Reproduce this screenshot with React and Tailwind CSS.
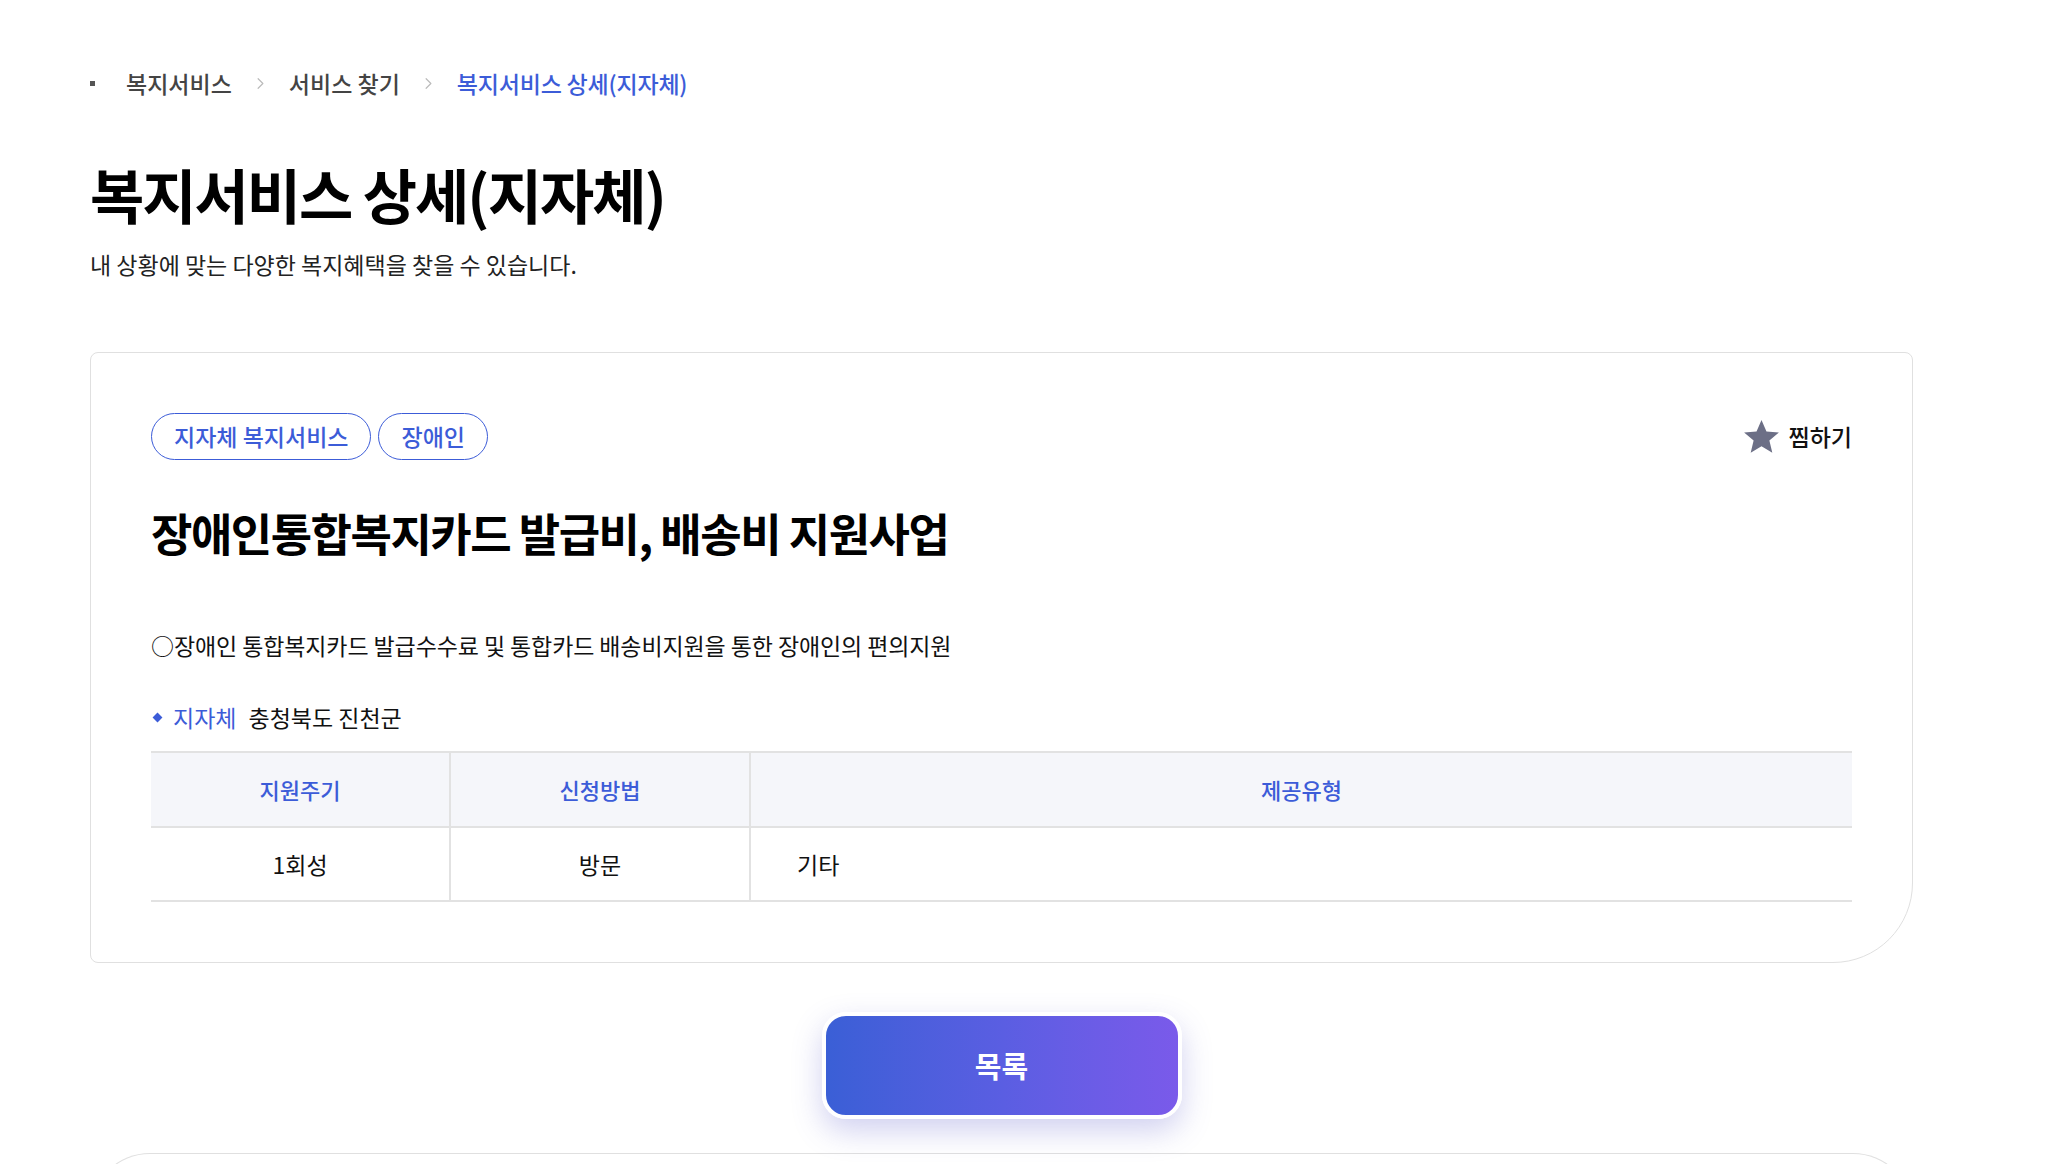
import { ChevronRight } from 'lucide-react'

const FONT = { fontFamily: '"Noto Sans CJK KR", "Noto Sans", sans-serif' }

function Breadcrumb() {
  return (
    <nav className="flex items-center h-[40px] text-[23px] font-medium text-[#444]">
      <span className="w-[5px] h-[5px] bg-[#555] mr-[31px]" />
      <span>복지서비스</span>
      <ChevronRight size={19} strokeWidth={1.5} className="text-[#bbb] mx-[19px]" />
      <span>서비스 찾기</span>
      <ChevronRight size={19} strokeWidth={1.5} className="text-[#bbb] mx-[19px]" />
      <span className="text-[#3c5cd8] tracking-[-0.2px]">복지서비스 상세(지자체)</span>
    </nav>
  )
}

function Tag({ children }) {
  return (
    <span className="h-[47px] px-[22px] flex items-center rounded-full border border-[#3c5cd8] text-[#3c5cd8] text-[23px] font-medium">
      {children}
    </span>
  )
}

function StarIcon() {
  return (
    <svg width="39" height="39" viewBox="0 0 24 24" className="text-[#6c6f86]">
      <path fill="currentColor" d="M12 1.8l3.05 7.1 7.65.6-5.85 5 1.8 7.5L12 18l-6.65 4 1.8-7.5-5.85-5 7.65-.6z" />
    </svg>
  )
}

function InfoTable() {
  return (
    <table className="w-full border-collapse text-[23px]">
      <thead>
        <tr className="bg-[#f5f6fa] border-t-2 border-[#e2e2e2] border-b-2 h-[75px]">
          <th className="w-[299px] font-medium text-[22px] text-[#3c5cd8] border-r-2 border-[#e2e2e2]">지원주기</th>
          <th className="w-[300px] font-medium text-[22px] text-[#3c5cd8] border-r-2 border-[#e2e2e2]">신청방법</th>
          <th className="font-medium text-[22px] text-[#3c5cd8]">제공유형</th>
        </tr>
      </thead>
      <tbody>
        <tr className="h-[74px] border-b-2 border-[#e2e2e2] text-[#111]">
          <td className="text-center border-r-2 border-[#e2e2e2]">1회성</td>
          <td className="text-center border-r-2 border-[#e2e2e2]">방문</td>
          <td className="pl-[46px]">기타</td>
        </tr>
      </tbody>
    </table>
  )
}

export default function App() {
  return (
    <div className="min-h-screen bg-white text-[#111] overflow-hidden" style={FONT}>
      <div className="w-[1823px] ml-[90px] pt-[63px]">
        <Breadcrumb />

        <h1 className="mt-[51px] text-[59px] leading-[80px] font-bold tracking-[-2px] text-black">
          복지서비스 상세(지자체)
        </h1>
        <p className="mt-[15px] text-[23px] leading-[30px] text-[#222]">
          내 상황에 맞는 다양한 복지혜택을 찾을 수 있습니다.
        </p>

        {/* 상세 카드 */}
        <section className="mt-[73px] border border-[#e0e0e0] rounded-[8px] rounded-br-[80px] px-[60px] pt-[60px] pb-[60px]">
          <div className="flex items-center justify-between">
            <div className="flex gap-[7px]">
              <Tag>지자체 복지서비스</Tag>
              <Tag>장애인</Tag>
            </div>
            <button className="flex items-center gap-[8px] text-[23px] font-medium text-[#111]">
              <StarIcon />
              <span>찜하기</span>
            </button>
          </div>

          <h2 className="mt-[37px] text-[45px] leading-[72px] font-bold tracking-[-1.5px] text-black">
            장애인통합복지카드 발급비, 배송비 지원사업
          </h2>

          <p className="mt-[60px] text-[23px] leading-[32px] tracking-[-0.1px] text-[#111]">
            ○장애인 통합복지카드 발급수수료 및 통합카드 배송비지원을 통한 장애인의 편의지원
          </p>

          <div className="mt-[41px] flex items-center text-[23px] leading-[30px]">
            <span className="w-[7px] h-[7px] bg-[#3c5cd8] rotate-45 ml-[3px] mr-[12px]" />
            <span className="text-[#3c5cd8] mr-[12px]">지자체</span>
            <span className="text-[#111]">충청북도 진천군</span>
          </div>

          <div className="mt-[19px]">
            <InfoTable />
          </div>
        </section>

        <div className="flex justify-center mt-[49px]">
          <button className="w-[360px] h-[107px] rounded-[24px] border-[4px] border-white bg-gradient-to-r from-[#3a5fd6] via-[#5a5ee2] to-[#7a5aea] text-white text-[29px] font-bold shadow-[0_12px_30px_rgba(90,90,200,0.28)]">
            목록
          </button>
        </div>

        <div className="mt-[34px] h-[60px] border border-[#e0e0e0] border-b-0 rounded-t-[60px]" />
      </div>
    </div>
  )
}
